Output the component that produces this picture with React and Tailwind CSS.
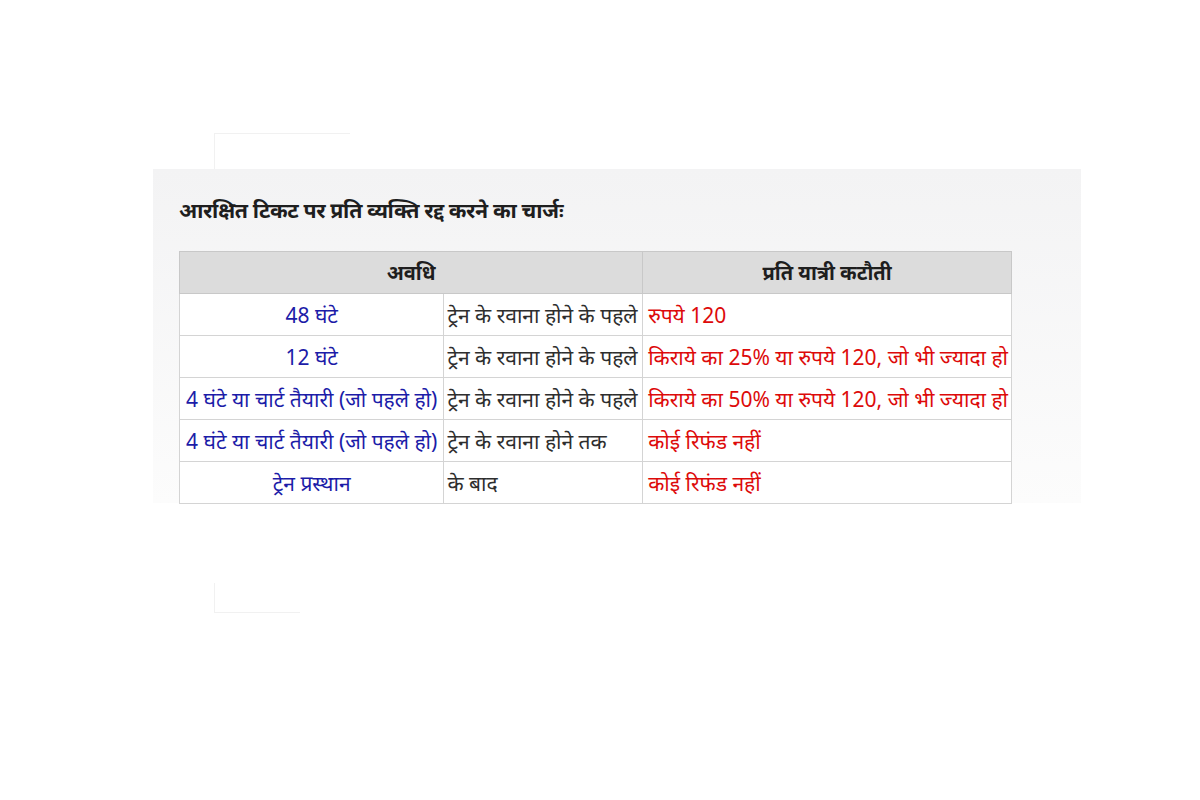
const rows = [
  { a: '48 घंटे', b: 'ट्रेन के रवाना होने के पहले', c: 'रुपये 120' },
  { a: '12 घंटे', b: 'ट्रेन के रवाना होने के पहले', c: 'किराये का 25% या रुपये 120, जो भी ज्यादा हो' },
  { a: '4 घंटे या चार्ट तैयारी (जो पहले हो)', b: 'ट्रेन के रवाना होने के पहले', c: 'किराये का 50% या रुपये 120, जो भी ज्यादा हो' },
  { a: '4 घंटे या चार्ट तैयारी (जो पहले हो)', b: 'ट्रेन के रवाना होने तक', c: 'कोई रिफंड नहीं' },
  { a: 'ट्रेन प्रस्थान', b: 'के बाद', c: 'कोई रिफंड नहीं' },
];

export default function App() {
  return (
    <div
      className="w-[1200px] h-[800px] bg-white overflow-hidden"
      style={{ fontFamily: '"Noto Sans", "Liberation Sans", sans-serif' }}
    >
      {/* faint top strip */}
      <div className="ml-[214px] mt-[133px] w-[136px] h-[36px] border-t border-l border-[#f1f1f1]" />

      {/* panel */}
      <div className="ml-[153px] w-[928px] h-[334px] bg-gradient-to-b from-[#f3f3f4] to-[#fcfcfc] pl-[26px] pt-[26px]">
        <h2 className="text-[21.3px] font-bold text-[#1e1e1e] leading-[30px] tracking-[-0.4px]">
          आरक्षित टिकट पर प्रति व्यक्ति रद्द करने का चार्जः
        </h2>

        <table className="mt-[26px] w-[833px] border-collapse text-[21px] leading-[40px] bg-white">
          <colgroup>
            <col className="w-[265px]" />
            <col className="w-[199px]" />
            <col className="w-[369px]" />
          </colgroup>
          <thead>
            <tr className="bg-[#dcdcdc]">
              <th colSpan={2} className="border border-[#c8c8c8] h-[42px] font-bold text-[20px] text-[#1e1e1e] text-center">
                अवधि
              </th>
              <th className="border border-[#c8c8c8] h-[42px] font-bold text-[20px] text-[#1e1e1e] text-center">
                प्रति यात्री कटौती
              </th>
            </tr>
          </thead>
          <tbody>
            {rows.map((r, i) => (
              <tr key={i} className="h-[42px]">
                <td className="border border-[#d4d4d4] text-center text-[#1c1ca8] whitespace-nowrap px-0">{r.a}</td>
                <td className="border border-[#d4d4d4] text-left text-[#2e2e2e] whitespace-nowrap pl-[3px]">{r.b}</td>
                <td className="border border-[#d4d4d4] text-left text-[#dd0a0a] whitespace-nowrap pl-[5px]">{r.c}</td>
              </tr>
            ))}
          </tbody>
        </table>
      </div>

      {/* faint bottom strip */}
      <div className="ml-[214px] mt-[80px] w-[86px] h-[30px] border-l border-b border-[#f1f1f1]" />
    </div>
  );
}
